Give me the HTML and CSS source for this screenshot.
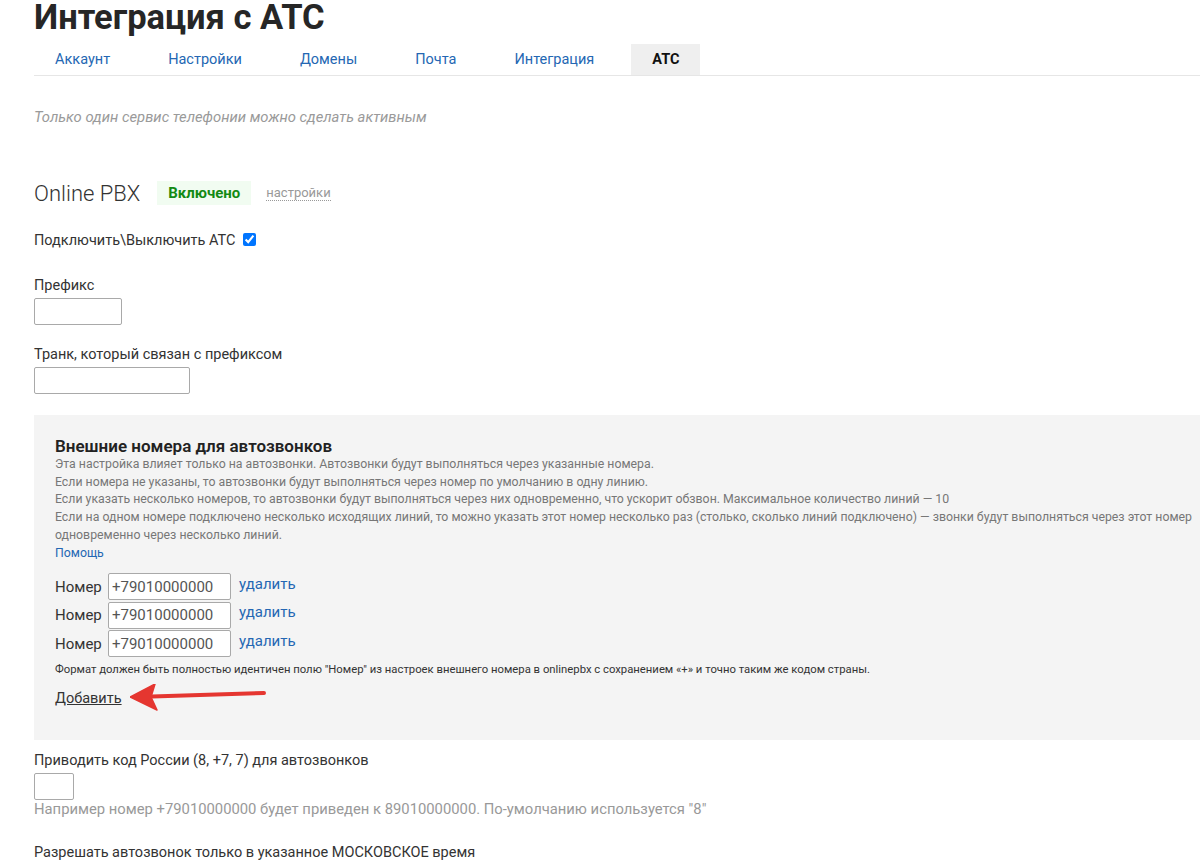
FILE: index.html
```html
<!DOCTYPE html>
<html lang="ru">
<head>
  <meta charset="UTF-8">
  <title>Интеграция с АТС</title>
  <link rel="stylesheet" href="styles.css">
</head>
<body>

  <h1>Интеграция с АТС</h1>

  <!-- Tabs -->
  <ul class="tabs">
    <li><a href="#">Аккаунт</a></li>
    <li><a href="#">Настройки</a></li>
    <li><a href="#">Домены</a></li>
    <li><a href="#">Почта</a></li>
    <li><a href="#">Интеграция</a></li>
    <li class="active"><a href="#">АТС</a></li>
  </ul>

  <p class="hint">Только один сервис телефонии можно сделать активным</p>

  <div class="service">
    <span class="service-name">Online PBX</span>
    <span class="badge">Включено</span>
    <a href="#" class="dotted">настройки</a>
  </div>

  <label class="check-row">Подключить\Выключить АТС <input type="checkbox" checked></label>

  <div class="field field-prefix">
    <label>Префикс</label>
    <input type="text" class="input-prefix">
  </div>

  <div class="field field-trunk">
    <label>Транк, который связан с префиксом</label>
    <input type="text" class="input-trunk">
  </div>

  <!-- External numbers -->
  <div class="numbers-box">
    <h3>Внешние номера для автозвонков</h3>
    <div class="numbers-info">
      Эта настройка влияет только на автозвонки. Автозвонки будут выполняться через указанные номера.<br>
      Если номера не указаны, то автозвонки будут выполняться через номер по умолчанию в одну линию.<br>
      Если указать несколько номеров, то автозвонки будут выполняться через них одновременно, что ускорит обзвон. Максимальное количество линий — 10<br>
      Если на одном номере подключено несколько исходящих линий, то можно указать этот номер несколько раз (столько, сколько линий подключено) — звонки будут выполняться через этот номер одновременно через несколько линий.<br>
      <a href="#">Помощь</a>
    </div>

    <div class="number-list">
      <div class="number-row">
        <span>Номер</span>
        <input type="text" value="+79010000000">
        <a href="#">удалить</a>
      </div>
      <div class="number-row">
        <span>Номер</span>
        <input type="text" value="+79010000000">
        <a href="#">удалить</a>
      </div>
      <div class="number-row">
        <span>Номер</span>
        <input type="text" value="+79010000000">
        <a href="#">удалить</a>
      </div>
    </div>

    <p class="format-note">Формат должен быть полностью идентичен полю "Номер" из настроек внешнего номера в onlinepbx с сохранением «+» и точно таким же кодом страны.</p>

    <div class="add-row">
      <a href="#" class="add-link">Добавить</a>
      <svg class="arrow" width="140" height="30" viewBox="0 0 140 30">
        <path d="M22 12.5 L134 9" stroke="#e53630" stroke-width="4" stroke-linecap="round" fill="none"/>
        <path d="M0 13 L25 0 L21 13 L27 26 Z" fill="#e53630" stroke="#e53630" stroke-width="1.5" stroke-linejoin="round"/>
      </svg>
    </div>
  </div>

  <div class="field field-code">
    <label>Приводить код России (8, +7, 7) для автозвонков</label>
    <input type="text" class="input-code">
    <div class="muted">Например номер +79010000000 будет приведен к 89010000000. По-умолчанию используется "8"</div>
  </div>

  <div class="field field-time">
    <label>Разрешать автозвонок только в указанное МОСКОВСКОЕ время</label>
  </div>

</body>
</html>
```

FILE: styles.css
```css
* {
  box-sizing: border-box;
}

body {
  margin: 0;
  padding: 0 0 0 34px;
  background-color: #fff;
  color: #333;
  font-family: Roboto, "Liberation Sans", sans-serif;
  font-size: 14.5px;
  overflow: hidden;
}

a {
  color: #2467b3;
  text-decoration: none;
}

h1 {
  margin: 0;
  font-size: 34.5px;
  line-height: 34px;
  font-weight: 700;
  color: #262626;
}

.tabs {
  display: flex;
  gap: 16px;
  list-style: none;
  margin: 10px 0 0;
  padding: 0;
  border-bottom: 1px solid #e6e6e6;
}

.tabs li {
  padding: 0 21px;
  line-height: 31px;
}

.tabs li.active {
  background-color: #efefef;
}

.tabs li.active a {
  color: #111;
  font-weight: 700;
}

.hint {
  margin: 31px 0 0;
  line-height: 20px;
  font-size: 14.8px;
  color: #9a9a9a;
  font-style: italic;
}

.service {
  display: flex;
  align-items: center;
  margin-top: 54px;
  height: 24px;
}

.service-name {
  font-size: 22px;
  font-weight: 300;
  color: #333;
}

.badge {
  margin-left: 17px;
  padding: 0 11px;
  line-height: 24px;
  background-color: #f1fcf1;
  color: #138a14;
  font-weight: 700;
  font-size: 15px;
}

.dotted {
  margin-left: 15px;
  font-size: 13px;
  color: #999;
  border-bottom: 1px dotted #999;
  line-height: 15px;
}

.check-row {
  display: block;
  margin-top: 26px;
  line-height: 20px;
}

.check-row input {
  margin: 0 0 0 4px;
  width: 13px;
  height: 13px;
  vertical-align: -1px;
}

.field label {
  display: block;
  line-height: 20px;
}

.field input {
  display: block;
  margin-top: 2px;
  height: 27px;
  border: 1px solid #a9a9a9;
  border-radius: 2px;
}

.field-prefix {
  margin-top: 25px;
}

.field-trunk {
  margin-top: 20px;
}

.field-code {
  margin-top: 11px;
}

.field-time {
  margin-top: 24px;
}

.input-prefix {
  width: 88px;
}

.input-trunk {
  width: 156px;
}

.input-code {
  width: 40px;
}

.muted {
  color: #999;
  font-size: 14.8px;
  line-height: 20px;
  margin-top: -1px;
}

.numbers-box {
  margin-top: 21px;
  padding: 21px 5px 27px 21px;
  background-color: #f4f4f4;
}

.numbers-box h3 {
  margin: 0;
  font-size: 17px;
  line-height: 20px;
  font-weight: 600;
  color: #222;
}

.numbers-info {
  font-size: 12.3px;
  line-height: 17.7px;
  color: #777;
}

.number-list {
  margin-top: 11px;
  display: flex;
  flex-direction: column;
  gap: 1.5px;
}

.number-row {
  display: flex;
  align-items: center;
  gap: 4px;
}

.number-row span {
  width: 49px;
  font-size: 15px;
  color: #333;
}

.number-row input {
  width: 123px;
  height: 27px;
  padding: 0 3px;
  border: 1px solid #a9a9a9;
  border-radius: 2px;
  background: #fff;
  font-family: inherit;
  font-size: 15px;
  color: #555;
}

.number-row a {
  margin-left: 4px;
  margin-top: -6px;
  font-size: 15px;
}

.format-note {
  margin: 6px 0 0;
  font-size: 11.3px;
  line-height: 14px;
  color: #333;
}

.add-row {
  display: flex;
  align-items: center;
  margin-top: 6px;
  height: 30px;
}

.add-link {
  color: #333;
  text-decoration: underline;
}

.arrow {
  margin-left: 8px;
  margin-top: 2px;
}
```
